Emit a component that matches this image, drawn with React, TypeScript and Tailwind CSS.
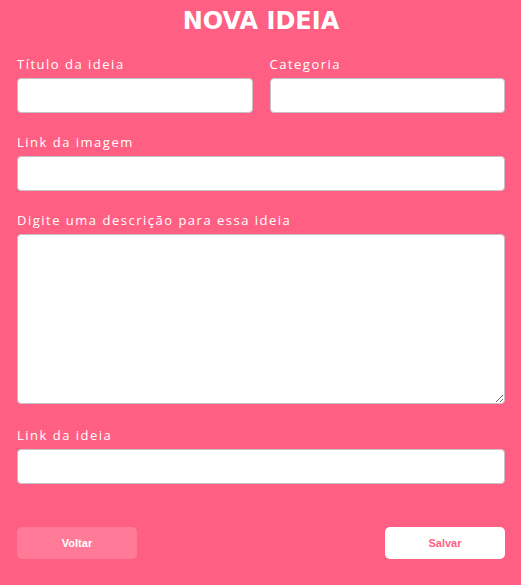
const Label = ({ children }: { children: string }) => (
  <label className="mb-[6px] block text-[13px] leading-4 tracking-[1.5px] text-white font-['Open_Sans',sans-serif] font-medium">
    {children}
  </label>
);

const inputClass =
  "block h-[35px] w-full rounded-[4px] border border-[#c8c0c4] bg-white px-2 outline-none";

export default function App() {
  return (
    <div className="min-h-[585px] w-full bg-[#ff5f82] pl-[17px] pr-[16px] pt-[5px] font-['Open_Sans',sans-serif]">
      <h1 className="mb-[19px] text-center text-[24px] font-bold leading-8 text-white font-['DejaVu_Sans',sans-serif]">
        NOVA IDEIA
      </h1>

      <div className="grid grid-cols-2 gap-[17px]">
        <div>
          <Label>Título da ideia</Label>
          <input className={inputClass} />
        </div>
        <div>
          <Label>Categoria</Label>
          <input className={inputClass} />
        </div>
      </div>

      <div className="mt-[21px]">
        <Label>Link da imagem</Label>
        <input className={inputClass} />
      </div>

      <div className="mt-[21px]">
        <Label>Digite uma descrição para essa ideia</Label>
        <textarea className="block h-[170px] w-full rounded-[4px] border border-[#c8c0c4] bg-white px-2 outline-none" />
      </div>

      <div className="mt-[23px]">
        <Label>Link da ideia</Label>
        <input className={inputClass} />
      </div>

      <div className="mt-[43px] flex justify-between">
        <button className="h-[32px] w-[120px] rounded-[5px] bg-[#ff7a97] text-[11px] font-bold text-white font-['Liberation_Sans',Arial,sans-serif]">
          Voltar
        </button>
        <button className="h-[32px] w-[120px] rounded-[5px] bg-white text-[11px] font-bold text-[#ff5f82] font-['Liberation_Sans',Arial,sans-serif]">
          Salvar
        </button>
      </div>
    </div>
  );
}
